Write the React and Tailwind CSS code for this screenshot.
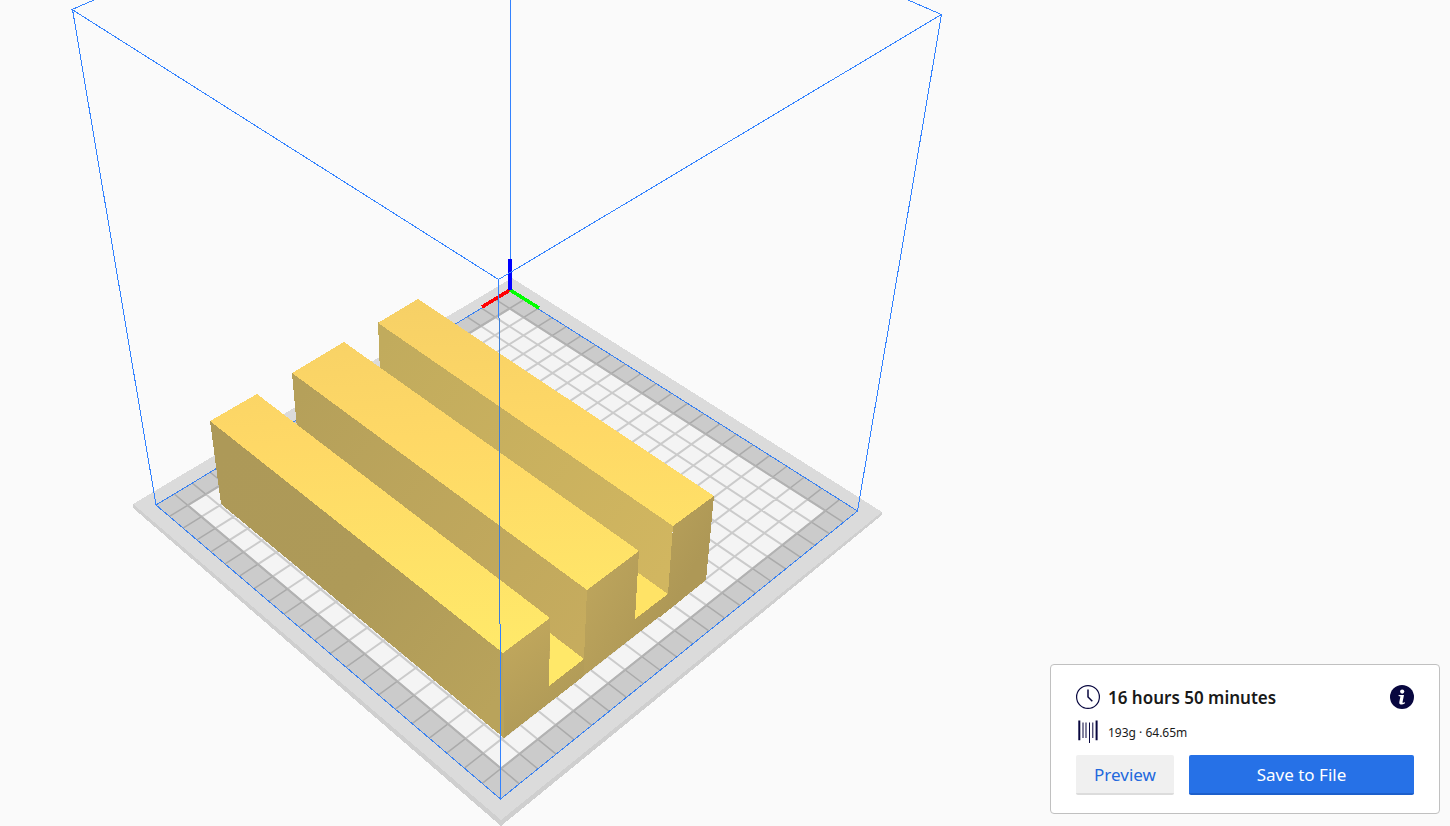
import React from 'react';

// Screen corners of the 220 x 220 mm build plate: back, right, front, left
const PLATE = [[510, 291], [857.5, 511], [500.5, 799], [156, 505]];
const CELLS = 22;

// Perspective mapping of the unit square onto the plate
function makeProjection([[x0, y0], [x1, y1], [x2, y2], [x3, y3]]) {
  const dx1 = x1 - x2;
  const dx2 = x3 - x2;
  const dy1 = y1 - y2;
  const dy2 = y3 - y2;
  const sx = x0 - x1 + x2 - x3;
  const sy = y0 - y1 + y2 - y3;
  const det = dx1 * dy2 - dx2 * dy1;
  const g = (sx * dy2 - dx2 * sy) / det;
  const h = (dx1 * sy - sx * dy1) / det;

  return (u, v) => {
    const w = 1 + g * u + h * v;
    const x = ((x1 - x0 + g * x1) * u + (x3 - x0 + h * x3) * v + x0) / w;
    const y = ((y1 - y0 + g * y1) * u + (y3 - y0 + h * y3) * v + y0) / w;
    return `${x.toFixed(2)} ${y.toFixed(2)}`;
  };
}

const project = makeProjection(PLATE);

const square = (a, b) => `M${project(a, a)}L${project(b, a)}L${project(b, b)}L${project(a, b)}Z`;

const gridPath = Array.from({ length: CELLS - 1 }, (_, i) => (i + 1) / CELLS)
  .map(t => `M${project(t, 0)}L${project(t, 1)}M${project(0, t)}L${project(1, t)}`)
  .join('');

const inner = square(1 / CELLS, 1 - 1 / CELLS);

function BuildPlate() {
  return (
    <g>
      <path d="M133 504L501 820L882 512V515L501 826L133 508Z" fill="#cfcfcf" />
      <path d="M512 278L882 512L501 820L133 504Z" fill="#dbdbdb" />
      <path d={square(0, 1)} fill="#cbcbcb" />
      <clipPath id="inner">
        <path d={inner} />
      </clipPath>
      <g fill="none" shapeRendering="auto">
        <path d={gridPath} stroke="#aaaaaa" strokeWidth="1.5" />
        <g clipPath="url(#inner)">
          <path d={inner} fill="#f4f4f4" />
          <path d={gridPath} stroke="#cbcbcb" strokeWidth="2" />
        </g>
        <path d={inner} stroke="#b2b2b2" strokeWidth="2" />
      </g>
      <path d={square(0, 1)} fill="none" stroke="#3b82f0" />
    </g>
  );
}

function Model() {
  return (
    <g>
      <defs>
        <linearGradient id="top" gradientUnits="userSpaceOnUse" x1="400" y1="300" x2="420" y2="690">
          <stop offset="0" stopColor="#f6d066" />
          <stop offset="0.35" stopColor="#fed866" />
          <stop offset="1" stopColor="#ffec6a" />
        </linearGradient>
        <linearGradient id="sideFront" gradientUnits="userSpaceOnUse" x1="216" y1="460" x2="504" y2="690">
          <stop offset="0" stopColor="#ad9958" />
          <stop offset="0.5" stopColor="#ae9a58" />
          <stop offset="1" stopColor="#b9a35b" />
        </linearGradient>
        <linearGradient id="sideMiddle" gradientUnits="userSpaceOnUse" x1="294" y1="400" x2="586" y2="630">
          <stop offset="0" stopColor="#b5a05a" />
          <stop offset="1" stopColor="#c6ac5e" />
        </linearGradient>
        <linearGradient id="sideBack" gradientUnits="userSpaceOnUse" x1="378" y1="350" x2="672" y2="560">
          <stop offset="0" stopColor="#c1ab5d" />
          <stop offset="1" stopColor="#d1b660" />
        </linearGradient>
        <linearGradient id="end" gradientUnits="userSpaceOnUse" x1="504" y1="650" x2="545" y2="705">
          <stop offset="0" stopColor="#bfa65c" />
          <stop offset="1" stopColor="#b29c58" />
        </linearGradient>
        <linearGradient id="endBack" gradientUnits="userSpaceOnUse" x1="586" y1="590" x2="660" y2="630">
          <stop offset="0" stopColor="#bca45c" />
          <stop offset="1" stopColor="#ae9856" />
        </linearGradient>
      </defs>

      {/* Base end face, behind the three bars */}
      <path d="M504 738L706 580L668 595L636 618L584 659L549 686Z" fill="#b19b58" />

      {/* Back bar */}
      <path d="M378 322L673 525L668 595L635 618L380 374Z" fill="url(#sideBack)" />
      <path d="M418 299L714 496L673 526L378 323Z" fill="url(#top)" />
      <path d="M673 526L714 496L706 580L660 617L668 594Z" fill="url(#endBack)" />
      <path d="M637 572L668 594L635 619Z" fill="#ffe366" />

      {/* Middle bar */}
      <path d="M292 373L587 590L584 659L549 686L298 440Z" fill="url(#sideMiddle)" />
      <path d="M344 342L639 551L587 590L292 373Z" fill="url(#top)" />
      <path d="M587 590L639 551L635 619L668 594L668 610L570 686L584 659Z" fill="url(#endBack)" />
      <path d="M550 633L584 659L549 686Z" fill="#ffe869" />

      {/* Front bar */}
      <path d="M210 421L503 653L504 738L221 504Z" fill="url(#sideFront)" />
      <path d="M257 394L550 618L503 653L210 421Z" fill="url(#top)" />
      <path d="M503 653L550 618L549 686L584 659L584 676L504 738Z" fill="url(#end)" />
    </g>
  );
}

function Viewport() {
  return (
    <svg className="block shrink-0" width="1000" height="826" viewBox="0 0 1000 826" shapeRendering="crispEdges" role="img" aria-label="Model on the build plate">
      <path d="M510.5 0V291" stroke="#3282ff" />
      <BuildPlate />
      <g strokeWidth="3.5">
        <path d="M510 290L482 307" stroke="#f00" />
        <path d="M510 290L539 308" stroke="#0f0" />
        <path d="M510 290V259" stroke="#00f" strokeWidth="4" />
      </g>
      <Model />
      {/* Print volume */}
      <g fill="none" stroke="#3282ff">
        <path d="M94 0L72 9.5L498.5 279.5L941.5 14.5L908 0" />
        <path d="M72.5 9.5L156 505M941.5 14.5L857.5 511" />
        <path d="M498.5 280V318M500.5 624V799" />
        <path d="M499.5 318V624" stroke="#3f7fd8" />
      </g>
    </svg>
  );
}

function ClockIcon() {
  return (
    <svg width="24" height="24" viewBox="0 0 24 24" fill="none" stroke="#08073f" aria-hidden="true">
      <circle cx="12" cy="12" r="11.4" strokeWidth="1.2" />
      <path d="M12 4.500V12L16.300 16.300" strokeWidth="1.500" />
    </svg>
  );
}

function SpoolIcon() {
  return (
    <svg width="24" height="24" viewBox="0 0 24 24" fill="#08073f" aria-hidden="true">
      <path d="M2.300 .6h2v19.600h-2zM19.600 .6h2v19.600h-2zM6.500 2.600h1v15.400h-1zM9.500 2.600h1v15.400h-1zM13 2.600h1v20.400h-1zM16.300 2.600h1v15.400h-1z" />
    </svg>
  );
}

function InfoIcon() {
  return (
    <svg width="24" height="24" viewBox="0 0 24 24" aria-hidden="true">
      <circle cx="12" cy="12" r="12" fill="#08073f" />
      <circle cx="12.200" cy="6.600" r="2.100" fill="#fff" />
      <path d="M8.600 10H14L12.500 17.200Q12.400 18 13.200 17.800L15 17.200V18.300Q12.700 19.800 10.600 19.500Q8.900 19.100 9.300 17.200L10.400 11.400L8.600 11Z" fill="#fff" />
    </svg>
  );
}

function PrintPanel() {
  return (
    <section className="w-[390px] rounded border border-[#c0c0c0] bg-white px-[25px] pt-5 pb-[18px]">
      <div className="flex h-6 items-center gap-2">
        <ClockIcon />
        <h1 className="flex-1 pt-px text-[17px] leading-6 font-semibold text-[#191919]">16 hours 50 minutes</h1>
        <button type="button" aria-label="Print details">
          <InfoIcon />
        </button>
      </div>
      <div className="mt-[11px] flex h-6 items-center gap-2">
        <SpoolIcon />
        <p className="pt-0.5 text-xs leading-6 text-[#191919]">193g · 64.65m</p>
      </div>
      <div className="mt-[11px] flex gap-[15px]">
        <button type="button" className="h-10 w-[98px] rounded-xs border-b-2 border-[#dcdcdc] bg-[#f0f0f0] pt-0.5 text-[17px] leading-6 text-[#2268dd]">Preview</button>
        <button type="button" className="h-10 flex-1 rounded-xs border-b-2 border-[#1d5fcb] bg-[#2671e7] pt-0.5 text-[17px] leading-6 text-white">Save to File</button>
      </div>
    </section>
  );
}

export default function App() {
  return (
    <main className="flex min-h-screen items-end justify-between overflow-hidden bg-[#fafafa] font-['Noto_Sans',sans-serif]">
      <Viewport />
      <div className="shrink-0 pr-2.5 pb-3">
        <PrintPanel />
      </div>
    </main>
  );
}
